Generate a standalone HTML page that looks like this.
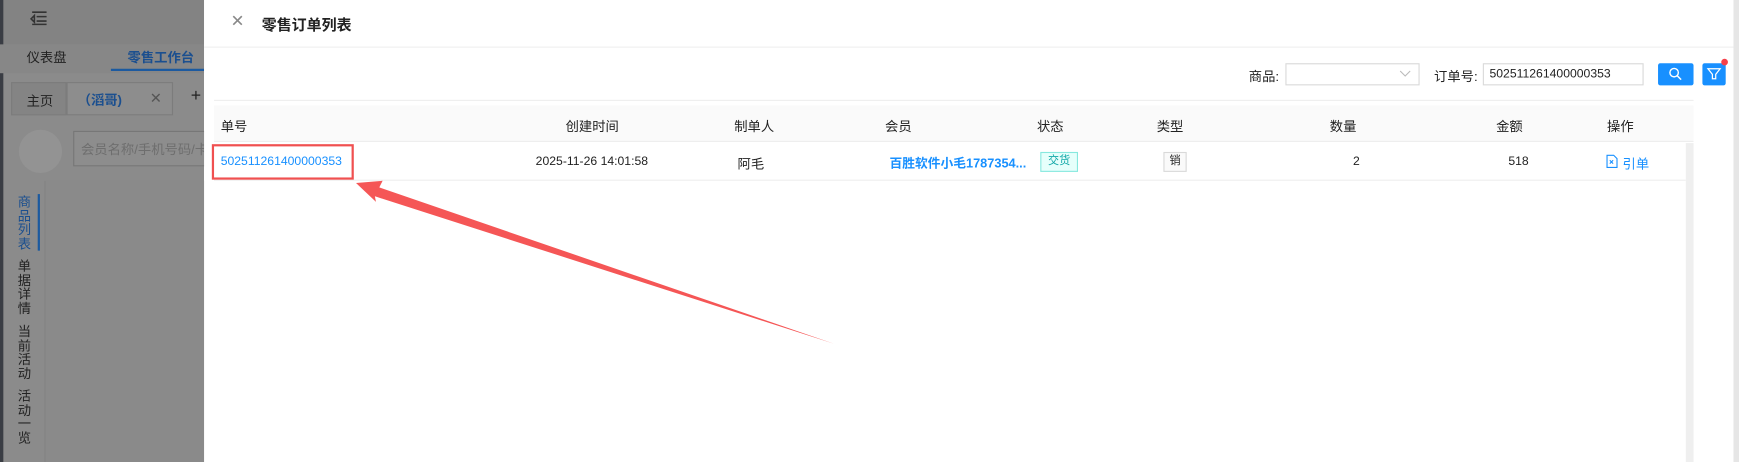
<!DOCTYPE html>
<html><head><meta charset="utf-8"><style>
*{margin:0;padding:0;box-sizing:border-box}
html,body{width:1739px;height:462px;overflow:hidden;background:#fff}
#s{position:absolute;left:0;top:0;width:1568px;height:417px;overflow:hidden;transform:scale(1.10906);transform-origin:0 0;font-family:"Liberation Sans","Noto Sans CJK SC",sans-serif;font-size:12px;color:#222}
.a{position:absolute;white-space:nowrap}
.ov{position:absolute;left:0;top:0;width:184px;height:417px;background:#8b8b8b}
.b{color:#1890ff}
.n{font-size:11px}
</style></head><body><div id="s">
<div class="ov"></div>
<div class="a" style="left:0;top:0;width:184px;height:40px;background:#838383"></div>
<div class="a" style="left:0;top:0;width:3px;height:417px;background:#3a3d44"></div>
<div class="a" style="left:0;top:40px;width:184px;height:26px;background:#878787"></div>
<svg class="a" style="left:27px;top:9px" width="16" height="14"><path d="M2 2h13M6 6h9M6 10h9M2 13h13M4 5v6L1 8z" stroke="#333" stroke-width="1.4" fill="none"/></svg>
<div class="a" style="left:24px;top:43px;font-size:12px;color:#222">仪表盘</div>
<div class="a" style="left:115px;top:43px;font-size:12px;color:#1b4f8f;font-weight:bold">零售工作台</div>
<div class="a" style="left:100px;top:62px;width:84px;height:2px;background:#1b5aa0"></div>
<div class="a" style="left:10px;top:74px;width:50px;height:30px;background:#848484;border:1px solid #7c7c7c"></div>
<div class="a" style="left:60px;top:74px;width:96px;height:30px;background:#8d8d8d;border:1px solid #7c7c7c"></div>
<div class="a" style="left:24px;top:82px">主页</div>
<div class="a" style="left:70px;top:81px;color:#1b4f8f;font-weight:bold">（滔哥)</div>
<div class="a" style="left:135px;top:81px;color:#555;font-size:13px">✕</div>
<div class="a" style="left:172px;top:78px;font-size:16px;color:#222">+</div>
<div class="a" style="left:17px;top:117px;width:39px;height:39px;border-radius:50%;background:#939393"></div>
<div class="a" style="left:66px;top:118px;width:130px;height:32px;border:1px solid #777;background:#8d8d8d"></div>
<div class="a" style="left:73px;top:126px;color:#6e6e6e">会员名称/手机号码/卡</div>
<div class="a" style="left:40px;top:163px;width:150px;height:260px;background:#8a8a8a;border-left:1px solid #838383"></div>
<div class="a" style="left:16px;top:176px;width:14px;line-height:12.5px;font-size:12px;color:#1b4f8f;white-space:normal">商品列表</div>
<div class="a" style="left:34px;top:175px;width:2px;height:51px;background:#1b5aa0"></div>
<div class="a" style="left:16px;top:234px;width:14px;line-height:12.5px;white-space:normal;color:#222">单据详情</div>
<div class="a" style="left:16px;top:293px;width:14px;line-height:12.5px;white-space:normal;color:#222">当前活动</div>
<div class="a" style="left:16px;top:351px;width:14px;line-height:12.5px;white-space:normal;color:#222">活动一览</div>
<div class="a" style="left:184px;top:0;width:1379px;height:417px;background:#fff"></div>
<div class="a" style="left:1563px;top:0;width:5px;height:417px;background:#e6e6e6"></div>
<div class="a" style="left:208px;top:10px;font-size:15px;color:#888">✕</div>
<div class="a" style="left:236px;top:11px;font-size:13.5px;color:#222;font-weight:bold">零售订单列表</div>
<div class="a" style="left:184px;top:42px;width:1379px;height:1px;background:#eee"></div>
<div class="a" style="left:1126px;top:60px">商品:</div>
<div class="a" style="left:1159px;top:57px;width:121px;height:20px;border:1px solid #d9d9d9"></div>
<svg class="a" style="left:1262px;top:63px" width="10" height="7"><path d="M0.5 1l4.5 4.5L9.5 1" stroke="#bbb" fill="none"/></svg>
<div class="a" style="left:1293px;top:60px">订单号:</div>
<div class="a" style="left:1337px;top:57px;width:145px;height:20px;border:1px solid #d9d9d9"></div>
<div class="a n" style="left:1343px;top:61px;color:#222">502511261400000353</div>
<div class="a" style="left:1495px;top:57px;width:32px;height:20px;background:#1890ff;border-radius:2px"></div>
<svg class="a" style="left:1504px;top:60px" width="14" height="14"><circle cx="5.5" cy="5.5" r="3.8" stroke="#fff" stroke-width="1.3" fill="none"/><path d="M8.3 8.3l3.5 3.5" stroke="#fff" stroke-width="1.4"/></svg>
<div class="a" style="left:1535px;top:57px;width:21px;height:20px;background:#1890ff;border-radius:2px"></div>
<svg class="a" style="left:1538px;top:60px" width="15" height="14"><path d="M2 2h11l-4 5v4h-3v-4z" stroke="#fff" stroke-width="1.1" fill="none"/></svg>
<div class="a" style="left:1552px;top:53px;width:6px;height:6px;border-radius:50%;background:#f5404a"></div>
<div class="a" style="left:193px;top:90px;width:1334px;height:1px;background:#eee"></div>
<div class="a" style="left:193px;top:95px;width:1334px;height:33px;background:#fafafa;border-bottom:1px solid #eee"></div>
<div class="a" style="left:199px;top:105px">单号</div>
<div class="a" style="left:510px;top:105px">创建时间</div>
<div class="a" style="left:662px;top:105px">制单人</div>
<div class="a" style="left:798px;top:105px">会员</div>
<div class="a" style="left:935px;top:105px">状态</div>
<div class="a" style="left:1043px;top:105px">类型</div>
<div class="a" style="left:1199px;top:105px">数量</div>
<div class="a" style="left:1349px;top:105px">金额</div>
<div class="a" style="left:1449px;top:105px">操作</div>
<div class="a" style="left:1520px;top:129px;width:7px;height:290px;background:#efefef"></div>
<div class="a" style="left:193px;top:162px;width:1327px;height:1px;background:#eee"></div>
<div class="a b n" style="left:199px;top:140px">502511261400000353</div>
<div class="a n" style="left:483px;top:140px">2025-11-26 14:01:58</div>
<div class="a" style="left:665px;top:139px">阿毛</div>
<div class="a b" style="left:802px;top:139px;font-weight:bold;font-size:11.5px">百胜软件小毛1787354...</div>
<div class="a" style="left:938px;top:137px;width:34px;height:18px;border:1px solid #87e8de;background:#e6fffb;color:#13a8a8;font-size:10px;text-align:center;line-height:16px">交货</div>
<div class="a" style="left:1049px;top:137px;width:21px;height:18px;border:1px solid #d9d9d9;background:#fafafa;font-size:10px;text-align:center;line-height:16px">销</div>
<div class="a n" style="left:1220px;top:140px">2</div>
<div class="a n" style="left:1360px;top:140px">518</div>
<svg class="a" style="left:1448px;top:139px" width="11" height="13"><path d="M1 1h6l3 3v8H1z" stroke="#1890ff" fill="none"/><path d="M3.5 5.5l3 3M6.5 5.5l-3 3" stroke="#1890ff"/></svg>
<div class="a b" style="left:1463px;top:139px">引单</div>
<div class="a" style="left:191px;top:130px;width:128px;height:32px;border:2.5px solid #f05050"></div>
<svg class="a" style="left:0;top:0" width="1568" height="417"><polygon points="321,165 345,163 342,169 752,310 338,177 339,182" fill="#f55656"/></svg>
</div></body></html>
